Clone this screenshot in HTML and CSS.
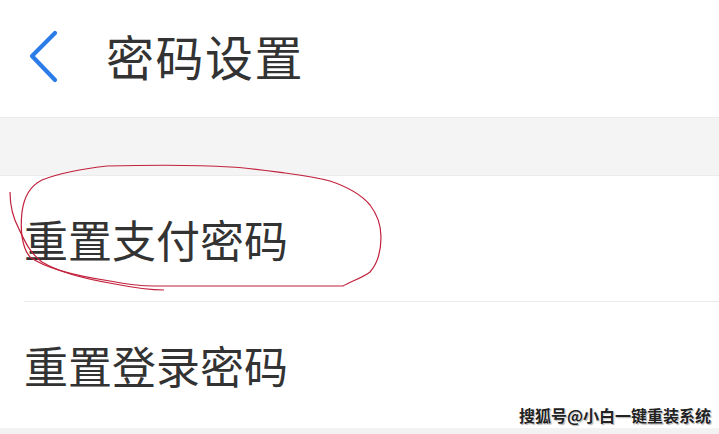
FILE: index.html
```html
<!DOCTYPE html>
<html lang="zh-CN">
  <head>
    <meta charset="UTF-8" />
    <title>密码设置</title>
    <link rel="stylesheet" href="styles.css">
  </head>
  <body>
    <div class="page">
      <div class="header">
        <svg class="back" width="34" height="56" viewBox="0 0 34 56">
          <path d="M27 4 L4 27 L27 51" fill="none" stroke="#2b7be9" stroke-width="4.2" stroke-linecap="round" stroke-linejoin="round" />
        </svg>
        <h1 class="title">密码设置</h1>
      </div>

      <div class="gap"></div>

      <div class="list">
        <div class="row">重置支付密码</div>
        <div class="row">重置登录密码</div>
      </div>

      <div class="footer"></div>

      <!-- hand-drawn circle on the screenshot -->
      <svg class="scribble" width="719" height="434" viewBox="0 0 719 434">
        <path d="M107 166 C90 168 62 172 42 180 C30 186 24 196 22 212 C20 230 22 248 30 257 C45 268 70 275 110 281 C125 284 140 286 155 286 L343 286 C352 281 362 278 370 272 C378 263 381 250 381 237 C381 225 377 214 370 205 C360 193 345 186 330 181 C315 177 300 175 285 173 C270 171 250 168 230 167 C200 165 150 165 107 166 Z" fill="none" stroke="#c2213c" stroke-width="1.2" />
        <path d="M10 192 C10 205 13 218 19 229 C25 242 30 253 42 262 C60 273 85 279 115 284 C135 288 150 290 164 290" fill="none" stroke="#c2213c" stroke-width="1.2" />
      </svg>

      <div class="watermark">搜狐号@小白一键重装系统</div>
    </div>
  </body>
</html>
```

FILE: styles.css
```css
body {
  margin: 0;
  padding: 0;
  background: #fff;
  font-family: "Noto Sans CJK SC", "Noto Sans", sans-serif;
  color: #333;
}

.page {
  position: relative;
  width: 719px;
  height: 434px;
  overflow: hidden;
}

.header {
  display: flex;
  align-items: center;
  height: 118px;
  border-bottom: 1px solid #ececec;
  box-sizing: border-box;
  padding: 0 0 8px 28px;
}

.back {
  display: block;
  flex: none;
  margin-top: 4px;
}

.title {
  margin: 0 0 0 44px;
  font-size: 48px;
  font-weight: 400;
  line-height: 1;
  letter-spacing: 1.5px;
  color: #333;
}

.gap {
  height: 57px;
  background: #f4f4f4;
  border-bottom: 1px solid #ececec;
}

.list {
  margin-left: 24px;
}

.row {
  display: flex;
  align-items: center;
  height: 125px;
  font-size: 44px;
  line-height: 1;
  color: #333;
  border-bottom: 1px solid #ebebeb;
}

.row:last-child {
  height: 126px;
  border-bottom: none;
}

.footer {
  height: 6px;
  background: #f2f2f2;
}

.scribble {
  position: absolute;
  top: 0;
  left: 0;
  pointer-events: none;
}

.watermark {
  position: absolute;
  top: 407px;
  right: 8px;
  font-size: 16px;
  font-weight: 700;
  line-height: 1;
  color: #222;
  text-shadow: 0 0 2px #fff, 0 0 2px #fff, 1px 1px 1px #888;
}
```
